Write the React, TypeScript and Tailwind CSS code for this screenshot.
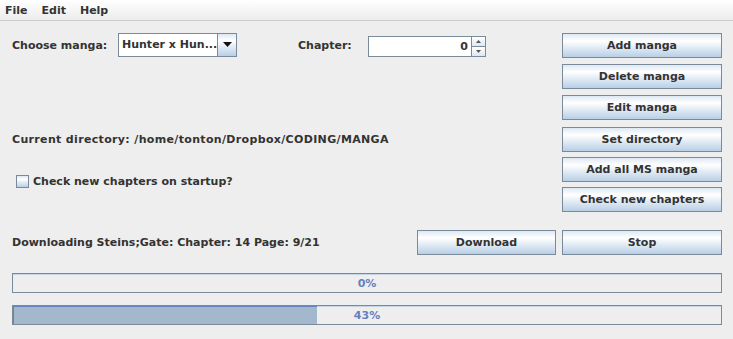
import React from 'react';

const btn =
  'h-[25px] shrink-0 flex items-center justify-center border border-[#7a8a99] bg-[linear-gradient(to_bottom,#dde8f3_0%,#ffffff_30%,#b8cfe5_100%)] text-[#333333] text-[11px] font-bold leading-none whitespace-nowrap';

type BarProps = { value: number };

const ProgressBar: React.FC<BarProps> = ({ value }) => (
  <div className="relative h-[20px] w-full border border-[#7a8a99] bg-[#eeeeee] shadow-[inset_0_1px_0_#c4d4e6]">
    {value > 0 && (
      <div
        className="absolute left-0 top-0 bottom-0 bg-[#a3b8cc] shadow-[inset_1px_1px_0_#6382bf]"
        style={{ width: `${value}%` }}
      />
    )}
    <div className="relative flex h-full items-center justify-center text-[11px] font-bold leading-none text-[#6382bf]">
      {value}%
    </div>
  </div>
);

export default function App() {
  return (
    <div className="h-[339px] w-[733px] overflow-hidden bg-[#eeeeee] text-[#333333] font-['DejaVu_Sans',sans-serif]">
      {/* menu bar */}
      <div className="flex h-[21px] items-center border-b border-[#cccccc] bg-[linear-gradient(to_bottom,#ffffff,#ececec)] text-[11px] font-bold leading-none">
        <span className="ml-[5px]">File</span>
        <span className="ml-[14px]">Edit</span>
        <span className="ml-[14px]">Help</span>
      </div>

      <div className="pl-[12px] pr-[11px]">
        <div className="flex gap-[7px] pt-[12px]">
          {/* left side */}
          <div className="min-w-0 flex-1 whitespace-nowrap text-[11px] font-bold leading-none">
            <div className="flex h-[25px] items-center">
              <span className="w-[106px] shrink-0">Choose manga:</span>
              <div className="flex h-[24px] w-[119px] shrink-0 -mt-[2px] border border-[#7a8a99] bg-white">
                <div className="flex flex-1 items-center pl-[3px]">Hunter x Hun...</div>
                <div className="flex w-[19px] items-center justify-center border-l border-[#7a8a99] bg-[linear-gradient(to_bottom,#dde8f3_0%,#ffffff_30%,#b8cfe5_100%)]">
                  <svg width="9" height="5" viewBox="0 0 9 5">
                    <path d="M0 0H9L4.5 5Z" fill="#111" />
                  </svg>
                </div>
              </div>
              <span className="ml-[61px] w-[70px] shrink-0">Chapter:</span>
              <div className="flex h-[21px] w-[118px] shrink-0 mt-[1px]">
                <div className="flex flex-1 items-center justify-end border border-r-0 border-[#7a8a99] bg-white pr-[3px]">
                  0
                </div>
                <div className="flex w-[15px] flex-col border border-[#7a8a99]">
                  <div className="flex flex-1 items-center justify-center border-b border-[#7a8a99] bg-[linear-gradient(to_bottom,#ffffff,#dde8f3)]">
                    <svg width="5" height="3" viewBox="0 0 5 3">
                      <path d="M2.5 0L5 3H0Z" fill="#555" />
                    </svg>
                  </div>
                  <div className="flex flex-1 items-center justify-center bg-[linear-gradient(to_bottom,#ffffff,#dde8f3)]">
                    <svg width="5" height="3" viewBox="0 0 5 3">
                      <path d="M0 0H5L2.5 3Z" fill="#555" />
                    </svg>
                  </div>
                </div>
              </div>
            </div>

            <div className="mt-[69px] flex h-[25px] items-center tracking-[0.34px]">
              Current directory: /home/tonton/Dropbox/CODING/MANGA
            </div>

            <div className="mt-[23px] flex items-center pl-[4px]">
              <div className="h-[13px] w-[13px] border border-[#7a8a99] bg-[linear-gradient(to_bottom,#dde8f3_0%,#ffffff_30%,#b8cfe5_100%)]" />
              <span className="ml-[4px]">Check new chapters on startup?</span>
            </div>
          </div>

          {/* right column of buttons */}
          <div className="flex w-[160px] shrink-0 flex-col">
            <button className={`${btn} w-full`}>Add manga</button>
            <button className={`${btn} w-full mt-[6px]`}>Delete manga</button>
            <button className={`${btn} w-full mt-[6px]`}>Edit manga</button>
            <button className={`${btn} w-full mt-[7px]`}>Set directory</button>
            <button className={`${btn} w-full mt-[5px]`}>Add all MS manga</button>
            <button className={`${btn} w-full mt-[5px]`}>Check new chapters</button>
          </div>
        </div>

        {/* download row */}
        <div className="mt-[18px] flex h-[25px] items-center whitespace-nowrap text-[11px] font-bold leading-none">
          <span className="min-w-0 flex-1">Downloading Steins;Gate: Chapter: 14 Page: 9/21</span>
          <button className={`${btn} w-[139px]`}>Download</button>
          <button className={`${btn} ml-[6px] w-[160px]`}>Stop</button>
        </div>

        <div className="mt-[18px] w-[710px]">
          <ProgressBar value={0} />
        </div>
        <div className="mt-[12px] w-[710px]">
          <ProgressBar value={43} />
        </div>
      </div>
    </div>
  );
}
